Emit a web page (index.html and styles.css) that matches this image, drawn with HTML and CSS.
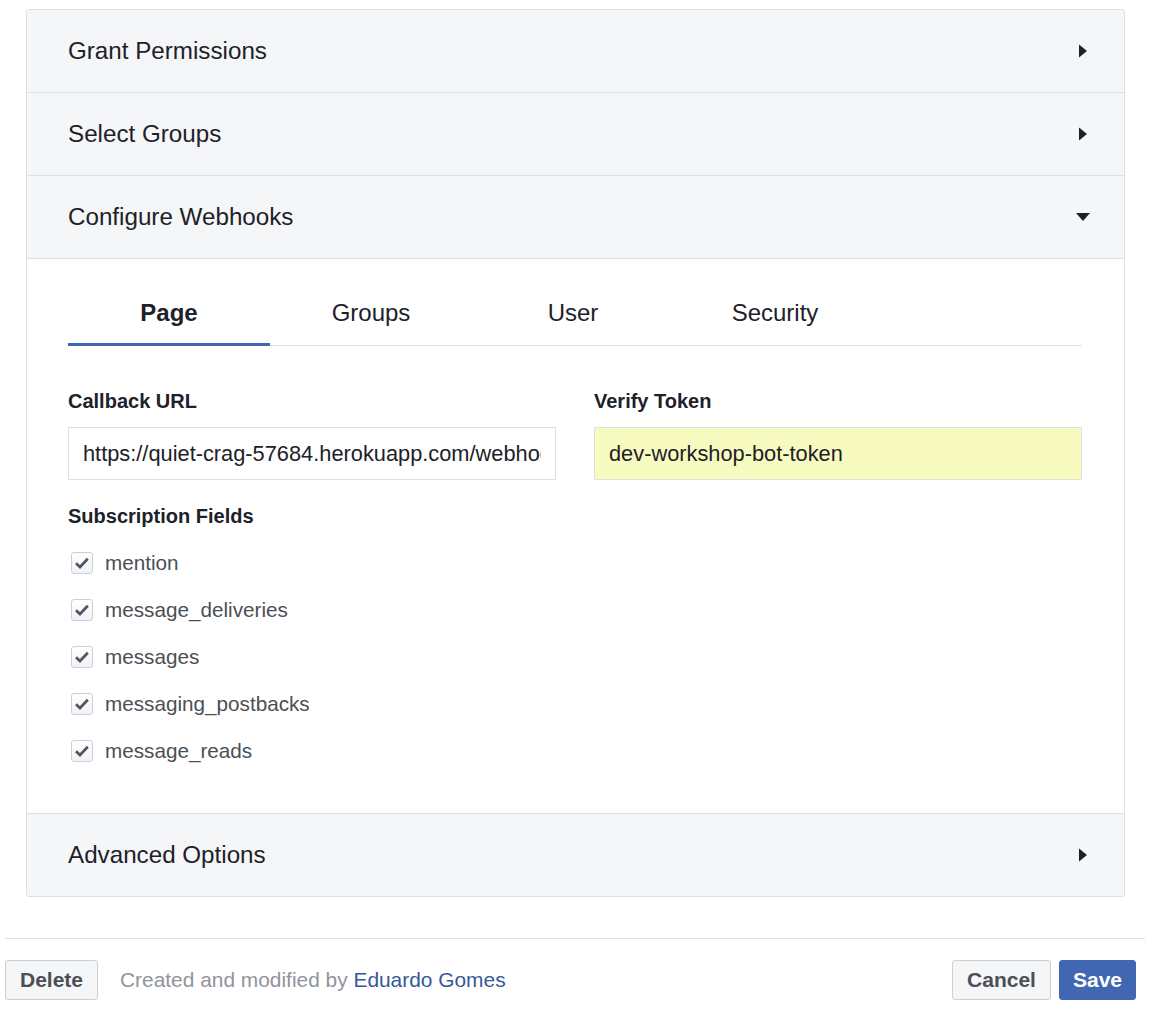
FILE: index.html
```html
<!DOCTYPE html>
<html>
<head>
<meta charset="utf-8">
<link rel="stylesheet" href="styles.css">
</head>
<body>
<div class="page">
  <div class="panel">
    <div class="section-header">
      <span>Grant Permissions</span>
      <svg class="caret" width="14" height="14" viewBox="0 0 14 14"><polygon points="3,0.5 11,7 3,13.5" fill="#1d2129"/></svg>
    </div>
    <div class="section-header">
      <span>Select Groups</span>
      <svg class="caret" width="14" height="14" viewBox="0 0 14 14"><polygon points="3,0.5 11,7 3,13.5" fill="#1d2129"/></svg>
    </div>
    <div class="section-header">
      <span>Configure Webhooks</span>
      <svg class="caret" width="14" height="14" viewBox="0 0 14 14"><polygon points="0,3 14,3 7,11" fill="#1d2129"/></svg>
    </div>
    <div class="section-body">
      <div class="tabs">
        <div class="tab active">Page</div>
        <div class="tab">Groups</div>
        <div class="tab">User</div>
        <div class="tab">Security</div>
      </div>
      <div class="fields">
        <label class="field">
          <span class="label">Callback URL</span>
          <input class="input" type="text" readonly value="https://quiet-crag-57684.herokuapp.com/webhook">
        </label>
        <label class="field">
          <span class="label">Verify Token</span>
          <input class="input token" type="text" readonly value="dev-workshop-bot-token">
        </label>
      </div>
      <div class="label sub-label">Subscription Fields</div>
      <ul class="checks">
        <li><span class="box"><svg width="22" height="22" viewBox="0 0 22 22"><polyline points="5,11.2 9,15 16.8,6.8" fill="none" stroke="#4f5467" stroke-width="2.7"/></svg></span>mention</li>
        <li><span class="box"><svg width="22" height="22" viewBox="0 0 22 22"><polyline points="5,11.2 9,15 16.8,6.8" fill="none" stroke="#4f5467" stroke-width="2.7"/></svg></span>message_deliveries</li>
        <li><span class="box"><svg width="22" height="22" viewBox="0 0 22 22"><polyline points="5,11.2 9,15 16.8,6.8" fill="none" stroke="#4f5467" stroke-width="2.7"/></svg></span>messages</li>
        <li><span class="box"><svg width="22" height="22" viewBox="0 0 22 22"><polyline points="5,11.2 9,15 16.8,6.8" fill="none" stroke="#4f5467" stroke-width="2.7"/></svg></span>messaging_postbacks</li>
        <li><span class="box"><svg width="22" height="22" viewBox="0 0 22 22"><polyline points="5,11.2 9,15 16.8,6.8" fill="none" stroke="#4f5467" stroke-width="2.7"/></svg></span>message_reads</li>
      </ul>
    </div>
    <div class="section-header last">
      <span>Advanced Options</span>
      <svg class="caret" width="14" height="14" viewBox="0 0 14 14"><polygon points="3,0.5 11,7 3,13.5" fill="#1d2129"/></svg>
    </div>
  </div>
  <div class="footer">
    <button class="btn">Delete</button>
    <span class="meta">Created and modified by <a href="#">Eduardo Gomes</a></span>
    <span class="spacer"></span>
    <button class="btn">Cancel</button>
    <button class="btn primary">Save</button>
  </div>
</div>
</body>
</html>
```

FILE: styles.css
```css
* { box-sizing: border-box; }

body {
  margin: 0;
  background: #ffffff;
  font-family: "Liberation Sans", Arial, sans-serif;
  color: #1d2129;
}

.page {
  padding: 9px 7px 0 5px;
}

.panel {
  margin: 0 20px 0 21px;
  border: 1px solid #dddfe2;
  border-radius: 3px;
  overflow: hidden;
}

.section-header {
  height: 83px;
  display: flex;
  align-items: center;
  justify-content: space-between;
  padding: 0 34px 0 41px;
  background: #f5f6f7;
  border-bottom: 1px solid #dddfe2;
  font-size: 24.2px;
  color: #1d2129;
}

.section-header.last {
  border-bottom: none;
  height: 82px;
}

.caret { display: block; }

.section-body {
  background: #ffffff;
  padding: 0 42px 39px 41px;
  border-bottom: 1px solid #dddfe2;
}

.tabs {
  display: flex;
  border-bottom: 1px solid #dddfe2;
}

.tab {
  width: 202px;
  text-align: center;
  font-size: 24px;
  line-height: 28px;
  padding: 40px 0 16px;
  border-bottom: 3px solid transparent;
  margin-bottom: -1px;
  color: #1d2129;
}

.tab.active {
  font-weight: bold;
  border-bottom-color: #4267b2;
}

.fields {
  display: grid;
  grid-template-columns: minmax(0, 1fr) minmax(0, 1fr);
  column-gap: 38px;
  margin-top: 43px;
}

.field {
  display: flex;
  flex-direction: column;
  min-width: 0;
}

.label {
  display: block;
  font-size: 20px;
  font-weight: bold;
  line-height: 24px;
  color: #1d2129;
}

.input {
  display: block;
  width: 100%;
  margin: 14px 0 0;
  height: 53px;
  border: 1px solid #dddfe2;
  border-radius: 0;
  padding: 0 14px;
  font-family: "Liberation Sans", Arial, sans-serif;
  font-size: 21.8px;
  color: #1d2129;
  background: #ffffff;
  outline: none;
}

.input.token {
  background: #f8fbc0;
}

.sub-label {
  margin-top: 24px;
}

.checks {
  list-style: none;
  margin: 11px 0 0;
  padding: 0;
}

.checks li {
  height: 47px;
  display: flex;
  align-items: center;
  font-size: 20.7px;
  color: #4b4f56;
}

.box {
  width: 22px;
  height: 22px;
  margin-left: 3px;
  margin-right: 12px;
  border: 1px solid #ccd0d5;
  border-radius: 3px;
  background: linear-gradient(#ffffff, #f1f2f4);
  display: flex;
  align-items: center;
  justify-content: center;
}

.box svg {
  display: block;
  margin: -1px;
}

.footer {
  margin-top: 41px;
  border-top: 1px solid #dddfe2;
  padding: 21px 9px 0 0;
  display: flex;
  align-items: center;
}

.btn {
  height: 40px;
  padding: 0 14px;
  font-family: "Liberation Sans", Arial, sans-serif;
  font-size: 21px;
  font-weight: bold;
  color: #4b4f56;
  background: #f5f6f7;
  border: 1px solid #ccd0d5;
  border-radius: 3px;
}

.btn + .btn { margin-left: 8px; }

.btn.primary {
  background: #4267b2;
  border-color: #4267b2;
  color: #ffffff;
  padding: 0 13px;
}

.meta {
  margin-left: 22px;
  font-size: 20.9px;
  color: #90949c;
}

.meta a {
  color: #365899;
  text-decoration: none;
}

.spacer { flex: 1; }
```
